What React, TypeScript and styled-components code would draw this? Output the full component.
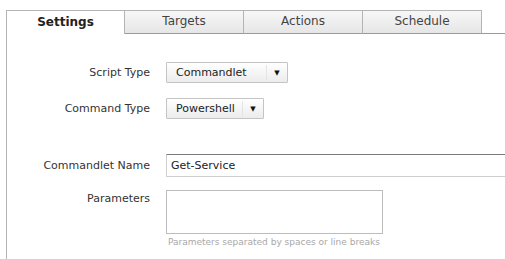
import * as React from 'react';
import styled, { createGlobalStyle } from 'styled-components';

const GlobalStyle = createGlobalStyle`
  body {
    margin: 0;
    background: #fff;
    font-family: Verdana, "DejaVu Sans", sans-serif;
    font-size: 11px;
    color: #333;
  }
`;

const Page = styled.div`
  padding: 10px 0 0 6px;
  height: 249px;
  display: flex;
  flex-direction: column;
  overflow: hidden;
`;

const TabBar = styled.div`
  display: flex;
  align-items: flex-end;
  height: 24px;
`;

const Tab = styled.div<{ active?: boolean; width: number }>`
  box-sizing: border-box;
  width: ${({ width }) => width}px;
  height: 24px;
  display: flex;
  align-items: center;
  justify-content: center;
  padding-bottom: 2px;
  border: 1px solid #b4b4b4;
  border-left: ${({ active }) => (active ? '1px solid #b4b4b4' : 'none')};
  border-bottom: ${({ active }) => (active ? 'none' : '1px solid #9a9a9a')};
  background: ${({ active }) =>
    active ? '#fff' : 'linear-gradient(#f7f7f7, #e6e6e6)'};
  font-weight: ${({ active }) => (active ? 'bold' : 'normal')};
  color: ${({ active }) => (active ? '#222' : '#444')};
  font-size: 12px;
`;

const TabFill = styled.div`
  flex: 1;
  height: 24px;
  box-sizing: border-box;
  border-bottom: 1px solid #9a9a9a;
`;

const Panel = styled.div`
  flex: 1;
  border-left: 1px solid #b4b4b4;
  padding-top: 28px;
  display: flex;
  flex-direction: column;
`;

const Row = styled.div<{ top?: number; align?: string }>`
  display: grid;
  grid-template-columns: 143px 1fr;
  column-gap: 16px;
  align-items: ${({ align }) => align || 'center'};
  margin-top: ${({ top }) => top || 0}px;
`;

const Label = styled.div<{ pad?: number }>`
  text-align: right;
  color: #333;
  padding-top: ${({ pad }) => pad || 0}px;
`;

const Select = styled.div<{ width: number }>`
  box-sizing: border-box;
  width: ${({ width }) => width}px;
  height: 21px;
  display: flex;
  align-items: center;
  border: 1px solid #c4c4c4;
  border-radius: 1px;
  background: linear-gradient(#ffffff, #ececec);
  color: #222;
`;

const SelectText = styled.span`
  flex: 1;
  padding-left: 9px;
`;

const Arrow = styled.span`
  width: 20px;
  height: 15px;
  border-left: 1px solid #e4e4e4;
  display: flex;
  align-items: center;
  justify-content: center;
  font-size: 7px;
  color: #111;
`;

const TextInput = styled.div`
  box-sizing: border-box;
  width: 360px;
  height: 23px;
  display: flex;
  align-items: center;
  padding-left: 4px;
  border: 1px solid #cfcfcf;
  border-top-color: #7a7a7a;
  color: #222;
`;

const TextArea = styled.div`
  box-sizing: border-box;
  width: 217px;
  height: 44px;
  border: 1px solid #bcbcbc;
`;

const Hint = styled.div`
  margin-top: 3px;
  padding-left: 2px;
  font-size: 9px;
  color: #a8a8a8;
`;

const tabs = [
  { label: 'Settings', width: 119, active: true },
  { label: 'Targets', width: 119 },
  { label: 'Actions', width: 119 },
  { label: 'Schedule', width: 119 },
];

export default function App() {
  return (
    <>
      <GlobalStyle />
      <Page>
        <TabBar>
          {tabs.map((t) => (
            <Tab key={t.label} active={t.active} width={t.width}>
              {t.label}
            </Tab>
          ))}
          <TabFill />
        </TabBar>
        <Panel>
          <Row>
            <Label>Script Type</Label>
            <Select width={122}>
              <SelectText>Commandlet</SelectText>
              <Arrow>▼</Arrow>
            </Select>
          </Row>
          <Row top={15}>
            <Label>Command Type</Label>
            <Select width={98}>
              <SelectText>Powershell</SelectText>
              <Arrow>▼</Arrow>
            </Select>
          </Row>
          <Row top={35}>
            <Label>Commandlet Name</Label>
            <TextInput>Get-Service</TextInput>
          </Row>
          <Row top={13} align="start">
            <Label pad={2}>Parameters</Label>
            <div>
              <TextArea />
              <Hint>Parameters separated by spaces or line breaks</Hint>
            </div>
          </Row>
        </Panel>
      </Page>
    </>
  );
}
